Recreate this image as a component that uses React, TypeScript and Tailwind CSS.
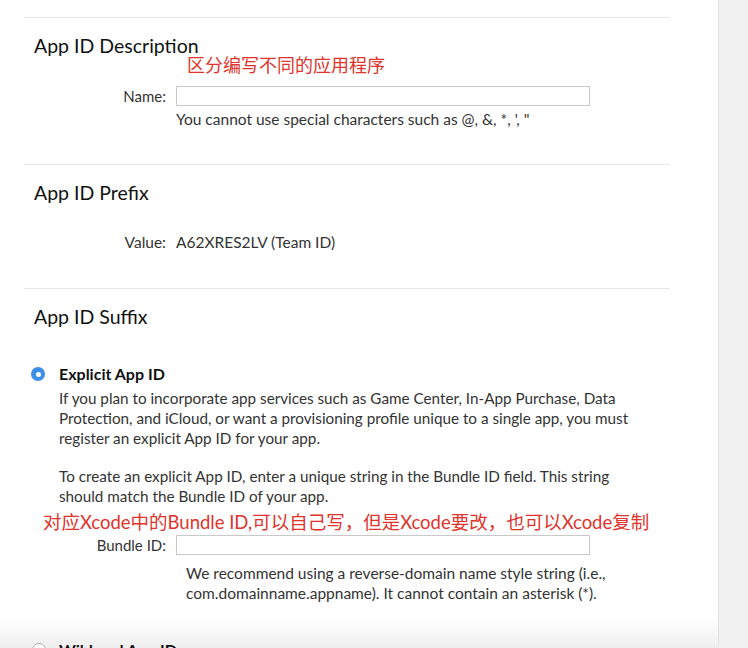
import React from "react";

const font = { fontFamily: "Lato, 'Noto Sans CJK SC', sans-serif" };

function Field({ label }: { label: string }) {
  return (
    <div className="flex items-center">
      <span className="w-[166px] shrink-0 text-right text-[15px] leading-[20px] text-[#333]">{label}</span>
      <div className="ml-[10px] h-[20px] w-[414px] border border-[#c9c9c9] bg-white" />
    </div>
  );
}

export default function App() {
  return (
    <div className="flex h-[648px] w-[748px] overflow-hidden bg-white text-[#333]" style={font}>
      <main className="relative w-[718px] shrink-0 bg-white">
        <div className="pt-[17px]">
          <div className="ml-[24px] w-[646px] border-t border-[#e6e6e6]" />

          {/* App ID Description */}
          <section className="pt-[16px]">
            <h2 className="ml-[34px] text-[19.5px] leading-[24px] text-[#111]">App ID Description</h2>
            <p className="ml-[187px] -mt-[4px] text-[18px] leading-[22px] text-[#e0332b]">区分编写不同的应用程序</p>
            <div className="mt-[10px]">
              <Field label="Name:" />
            </div>
            <p className="ml-[176px] mt-[3px] text-[15.5px] leading-[20px]">
              You cannot use special characters such as @, &amp;, *, ', "
            </p>
          </section>
          <div className="ml-[24px] mt-[35px] w-[646px] border-t border-[#e6e6e6]" />

          {/* App ID Prefix */}
          <section className="pt-[16px]">
            <h2 className="ml-[34px] text-[19.5px] leading-[24px] text-[#111]">App ID Prefix</h2>
            <div className="mt-[26px] flex text-[15.5px] leading-[22px]">
              <span className="w-[166px] text-right">Value:</span>
              <span className="ml-[10px]">A62XRES2LV (Team ID)</span>
            </div>
          </section>
          <div className="ml-[24px] mt-[35px] w-[646px] border-t border-[#e6e6e6]" />

          {/* App ID Suffix */}
          <section className="pt-[16px]">
            <h2 className="ml-[34px] text-[19.5px] leading-[24px] text-[#111]">App ID Suffix</h2>

            <div className="mt-[35px] flex items-center">
              <span className="ml-[31px] flex h-[14px] w-[14px] items-center justify-center rounded-full bg-[#3a8fe6]">
                <span className="h-[5px] w-[5px] rounded-full bg-white" />
              </span>
              <span className="ml-[14px] text-[16px] font-bold leading-[20px] text-[#111]">Explicit App ID</span>
            </div>
            <div className="ml-[59px] mt-[4px] w-[600px] text-[15.25px] leading-[20px]">
              <p>
                If you plan to incorporate app services such as Game Center, In-App Purchase, Data
                <br />
                Protection, and iCloud, or want a provisioning profile unique to a single app, you must
                <br />
                register an explicit App ID for your app.
              </p>
              <p className="mt-[18px]">
                To create an explicit App ID, enter a unique string in the Bundle ID field. This string
                <br />
                should match the Bundle ID of your app.
              </p>
            </div>
            <p className="ml-[43px] mt-[5px] whitespace-nowrap text-[18.5px] leading-[22px] text-[#e0332b]">
              对应Xcode中的Bundle ID,可以自己写，但是Xcode要改，也可以Xcode复制
            </p>
            <div className="mt-[2px]">
              <Field label="Bundle ID:" />
            </div>
            <p className="ml-[186px] mt-[8px] text-[15.5px] leading-[20px]">
              We recommend using a reverse-domain name style string (i.e.,
              <br />
              com.domainname.appname). It cannot contain an asterisk (*).
            </p>
          </section>
        </div>

        <div className="absolute bottom-0 left-0 h-[30px] w-full bg-gradient-to-b from-white to-[#efefef]" />
        <div className="absolute left-0 top-[640px] flex items-center">
          <span className="ml-[32px] h-[14px] w-[14px] rounded-full border border-[#aaa] bg-white" />
          <span className="ml-[13px] text-[16px] font-bold leading-[20px] text-[#111]">Wildcard App ID</span>
        </div>
      </main>
      <aside className="w-[30px] shrink-0 border-l border-[#e2e2e2] bg-[#f1f1f1]" />
    </div>
  );
}
